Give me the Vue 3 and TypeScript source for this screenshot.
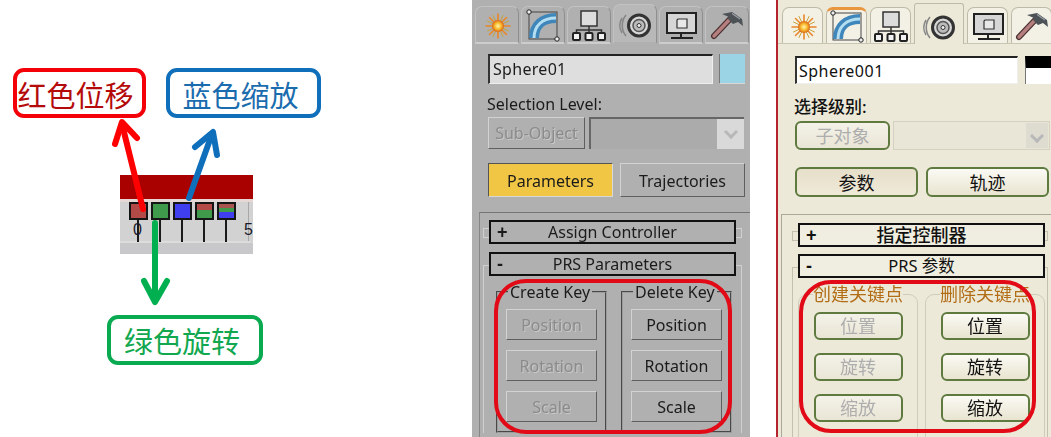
<script setup lang="ts">
interface Group {
  title: string;
  keys: string[];
  disabled: boolean;
}

interface Panel {
  theme: string;
  name: string;
  level: string;
  subObject: string;
  modes: string[];
  controller: string;
  params: string;
  groups: Group[];
}

const tabs = ["create", "modify", "hierarchy", "motion", "display", "utilities"];
const keyKinds = ["red", "green", "blue", "rg", "rgb"];

const panels: Panel[] = [
  {
    theme: "classic",
    name: "Sphere01",
    level: "Selection Level:",
    subObject: "Sub-Object",
    modes: ["Parameters", "Trajectories"],
    controller: "Assign Controller",
    params: "PRS Parameters",
    groups: [
      { title: "Create Key", keys: ["Position", "Rotation", "Scale"], disabled: true },
      { title: "Delete Key", keys: ["Position", "Rotation", "Scale"], disabled: false },
    ],
  },
  {
    theme: "xp",
    name: "Sphere001",
    level: "选择级别:",
    subObject: "子对象",
    modes: ["参数", "轨迹"],
    controller: "指定控制器",
    params: "PRS 参数",
    groups: [
      { title: "创建关键点", keys: ["位置", "旋转", "缩放"], disabled: true },
      { title: "删除关键点", keys: ["位置", "旋转", "缩放"], disabled: false },
    ],
  },
];
</script>

<template>
  <svg class="defs" aria-hidden="true">
    <defs>
      <radialGradient id="sun">
        <stop offset="0" stop-color="#fff7b0" />
        <stop offset="0.55" stop-color="#f9b92c" />
        <stop offset="1" stop-color="#d8641a" />
      </radialGradient>
    </defs>
    <symbol id="ic-create" viewBox="0 0 44 38">
      <g stroke="#e8882a" stroke-width="1.6" stroke-linecap="round">
        <path d="M23 7v24M11 19h24M14.500 10.500l17 17M31.500 10.500l-17 17" />
        <path stroke="#c9a23a" stroke-width="1" d="M18 8.500l10 21M28 8.500l-10 21M12.500 14l21 10M33.500 14l-21 10" />
      </g>
      <circle cx="23" cy="19" r="6" fill="url(#sun)" />
    </symbol>
    <symbol id="ic-modify" viewBox="0 0 44 38">
      <rect x="8" y="5" width="28" height="27" fill="none" stroke="#444" stroke-width="1" />
      <path d="M13 31C13 19 21 11 35 11" fill="none" stroke="#3f86ba" stroke-width="10" />
      <path d="M13 31C13 19 21 11 35 11" fill="none" stroke="#b4def2" stroke-width="3" />
      <circle cx="8" cy="5" r="2.200" fill="#eee" stroke="#222" />
      <circle cx="36" cy="32" r="2.200" fill="#eee" stroke="#222" />
    </symbol>
    <symbol id="ic-hierarchy" viewBox="0 0 44 38">
      <rect x="14" y="4" width="16" height="15" fill="#dcdcdc" stroke="#333" stroke-width="1.500" />
      <path d="M22 19v7M9.500 26v-3h25v3" fill="none" stroke="#333" stroke-width="1.500" />
      <g fill="#f2f2f2" stroke="#222" stroke-width="2">
        <rect x="6" y="26" width="7" height="7" rx="1" />
        <rect x="18.500" y="26" width="7" height="7" rx="1" />
        <rect x="31" y="26" width="7" height="7" rx="1" />
      </g>
    </symbol>
    <symbol id="ic-motion" viewBox="0 0 44 38">
      <path d="M13 8C8 14 8 23 13 29M9 11C6 16 6 21 9 26" fill="none" stroke="#858585" stroke-width="1.500" />
      <circle cx="26" cy="18.500" r="10.500" fill="#d8d8d8" stroke="#333" stroke-width="3" />
      <circle cx="26" cy="18.500" r="6" fill="#bbb" stroke="#555" stroke-width="1.500" />
      <circle cx="26" cy="18.500" r="2" fill="#eee" stroke="#333" />
    </symbol>
    <symbol id="ic-display" viewBox="0 0 44 38">
      <rect x="8" y="6" width="29" height="20" fill="#d6d6d6" stroke="#222" stroke-width="2" />
      <path d="M19 12h9v9h-10v-8z" fill="#e8e8e8" stroke="#333" stroke-width="1.200" />
      <path d="M22 26v4M12 31h22" stroke="#222" stroke-width="2" />
    </symbol>
    <symbol id="ic-utilities" viewBox="0 0 44 38">
      <path d="M9 29L26 11" stroke="#4a3030" stroke-width="6" stroke-linecap="round" />
      <path d="M9 29L26 11" stroke="#b57f7f" stroke-width="3.500" stroke-linecap="round" />
      <path d="M17 7L27 5L37 12L38 19L33 15L28 17L23 12L24 10z" fill="#4d5257" />
      <path d="M27 6.500L35 12" stroke="#9aa0a5" stroke-width="1.200" />
    </symbol>
  </svg>

  <main class="page">
    <section class="diagram">
      <div class="note note-red">红色位移</div>
      <div class="note note-blue">蓝色缩放</div>
      <div class="note note-green">绿色旋转</div>

      <div class="timeline">
        <div class="timeline-bar"></div>
        <div class="timeline-track">
          <div class="timeline-keys">
            <span v-for="kind in keyKinds" :key="kind" class="key" :class="'key-' + kind"></span>
          </div>
          <span class="mark mark-0">0</span>
          <span class="mark mark-5">5</span>
        </div>
      </div>

      <svg class="arrows" viewBox="0 0 340 437" fill="none" stroke-linecap="round" stroke-linejoin="round">
        <g stroke="#ff0000" stroke-width="6">
          <path d="M143 209L122 124" />
          <path d="M115 144L122 122L137 138" />
        </g>
        <g stroke="#0f6fbb" stroke-width="6">
          <path d="M189 198L212 134" />
          <path d="M195 147L213 132L217 155" />
        </g>
        <g stroke="#00b050" stroke-width="6">
          <path d="M155 223V300" />
          <path d="M144 281L155 302L167 281" />
        </g>
      </svg>
    </section>

    <section v-for="panel in panels" :key="panel.theme" class="panel" :class="panel.theme">
      <nav class="tabs">
        <div v-for="tab in tabs" :key="tab" class="tab" :class="'tab-' + tab">
          <svg class="tab-icon"><use :href="'#ic-' + tab" /></svg>
        </div>
      </nav>

      <div class="name-row">
        <div class="name">{{ panel.name }}</div>
        <div class="swatch"></div>
      </div>
      <div class="level">{{ panel.level }}</div>
      <div class="sub-row">
        <button class="btn sub" disabled>{{ panel.subObject }}</button>
        <div class="select"><span class="select-arrow"></span></div>
      </div>
      <div class="mode-row">
        <button
          v-for="(mode, i) in panel.modes"
          :key="mode"
          class="btn mode"
          :class="{ active: i === 0 }"
        >
          {{ mode }}
        </button>
      </div>

      <div class="rollups">
        <div class="rollout rollout-closed">
          <div class="rollout-head"><b>+</b>{{ panel.controller }}</div>
        </div>
        <div class="rollout rollout-open">
          <div class="rollout-head"><b>-</b>{{ panel.params }}</div>
          <div class="groups">
            <fieldset v-for="group in panel.groups" :key="group.title" class="group">
              <legend>{{ group.title }}</legend>
              <button v-for="k in group.keys" :key="k" class="btn key-btn" :disabled="group.disabled">
                {{ k }}
              </button>
            </fieldset>
          </div>
        </div>
      </div>

      <div class="ring"></div>
    </section>
  </main>
</template>

<style>
html,
body {
  background: #fff;
  overflow: hidden;
}
</style>

<style scoped>
.defs {
  position: absolute;
  width: 0;
  height: 0;
}

.page {
  display: flex;
  width: 1051px;
  height: 437px;
  overflow: hidden;
  font-family: "Noto Sans CJK SC", sans-serif;
}

/* left diagram, a free canvas */
.diagram {
  position: relative;
  flex: 0 0 472px;
}
.note {
  position: absolute;
  display: flex;
  align-items: center;
  justify-content: center;
  box-sizing: border-box;
  height: 50px;
  padding: 3px 6px 0 0;
  border: 4px solid;
  border-radius: 11px;
  font-size: 29px;
  line-height: 1;
}
.note-red {
  left: 13px;
  top: 68px;
  width: 133px;
  padding-right: 8px;
  border-color: #f40009;
  color: #b40a0a;
}
.note-blue {
  left: 166px;
  top: 68px;
  width: 155px;
  border-color: #0f6fbb;
  color: #1b6cae;
}
.note-green {
  left: 107px;
  top: 315px;
  width: 156px;
  padding-top: 1px;
  border-color: #0aaa50;
  color: #12a84f;
}
.timeline {
  position: absolute;
  left: 120px;
  top: 175px;
  width: 133px;
  height: 79px;
  background: #c8c8ca;
}
.timeline-bar {
  height: 24px;
  background: #a90000;
  border-bottom: 3px solid #e6d6d4;
}
.timeline-track {
  position: relative;
  height: 41px;
  padding: 0 0 0 9px;
  background: #d2d2d2;
  border-bottom: 2px solid #dcdcdc;
  border-right: 4px solid transparent;
  box-sizing: border-box;
  box-shadow: inset -5px 0 0 -4px #a8a8a8;
}
.timeline-keys {
  display: flex;
  gap: 3px;
}
.key {
  position: relative;
  box-sizing: border-box;
  width: 19px;
  height: 18px;
  border: 2px solid #151515;
}
.key::after {
  content: "";
  position: absolute;
  left: 6px;
  top: 16px;
  width: 2px;
  height: 22px;
  background: #1a1a1a;
}
.key-red {
  background: #b34a48;
}
.key-green {
  background: #3f9a4c;
}
.key-blue {
  background: #3f3ff0;
}
.key-rg {
  background: linear-gradient(#b34a48 45%, #3f9a4c 45%);
}
.key-rgb {
  background: linear-gradient(#a85550 25%, #3f9a4c 25%, #3f9a4c 60%, #3f3ff0 60%);
}
.mark {
  position: absolute;
  top: 19px;
  font-family: "Liberation Sans", sans-serif;
  font-size: 16px;
  line-height: 18px;
  color: #1b1b2a;
}
.mark-0 {
  left: 13px;
}
.mark-5 {
  left: 124px;
}
.arrows {
  position: absolute;
  left: 0;
  top: 0;
  width: 340px;
  height: 437px;
}

/* command panels */
.panel {
  position: relative;
  box-sizing: border-box;
  min-width: 0;
  height: 437px;
  filter: blur(0.5px);
}
.classic {
  flex: 0 0 278px;
  margin-right: 26px;
  background: #b0b0b0;
  color: #1b1b1b;
  font-family: "Noto Sans", sans-serif;
  font-size: 16px;
}
.xp {
  flex: 0 0 275px;
  background: #ece9d8;
  color: #111;
  border-left: 2px solid #b5232c;
  font-family: "Noto Sans", "Noto Sans CJK SC", sans-serif;
  font-size: 16px;
}

.tabs {
  display: flex;
  box-sizing: border-box;
  height: 44px;
  padding: 6px 0 0 3px;
  gap: 2px;
}
.xp .tabs {
  padding: 7px 0 0 4px;
  gap: 3px;
  border-bottom: 1px solid #c9c6b4;
}
.tab {
  position: relative;
  flex: 0 0 44px;
  box-sizing: border-box;
  border: 1px solid #c2c2c2;
  border-right-color: #8f8f8f;
  border-bottom: 2px solid #cdcdcd;
  border-radius: 7px 7px 0 0;
}
.xp .tab {
  flex-basis: 41px;
  border-color: #bdbaa8;
  border-bottom: 0;
  background: #f3f1e5;
}
.tab-motion {
  margin-top: -2px;
}
.classic .tab-motion {
  background: #b8b8b8;
  border-bottom-color: #b0b0b0;
}
.xp .tab-motion {
  flex-basis: 50px;
  margin-top: -4px;
  background: #ece9d8;
  margin-bottom: -1px;
  border-radius: 3px 3px 0 0;
}
.xp .tab-modify {
  border-top: 3px solid #e8973e;
}
.tab-icon {
  position: absolute;
  left: 50%;
  bottom: -3px;
  width: 44px;
  height: 38px;
  margin-left: -22px;
}

.name-row {
  display: flex;
  height: 30px;
  margin: 10px 0 0 16px;
  gap: 6px;
}
.xp .name-row {
  height: 28px;
  margin: 12px 0 0 17px;
}
.name {
  box-sizing: border-box;
  width: 225px;
  padding-left: 3px;
  line-height: 27px;
  letter-spacing: 0.3px;
  background: #dedede;
  border-top: 2px solid #222;
  border-left: 2px solid #333;
  border-right: 1px solid #efefef;
  border-bottom: 1px solid #efefef;
}
.xp .name {
  width: 223px;
  padding-left: 2px;
  background: #fff;
  line-height: 27px;
  letter-spacing: 0.5px;
}
.swatch {
  width: 25px;
  background: #9bd4e5;
  border-left: 1px solid #777;
  border-bottom: 1px solid #d8d8d8;
}
.xp .swatch {
  border-top: 12px solid #000;
  background: #fff;
  border-bottom: 0;
  margin-left: 1px;
}
.level {
  height: 33px;
  margin-left: 15px;
  line-height: 41px;
}
.xp .level {
  height: 37px;
  margin-left: 16px;
  font-size: 17px;
  font-weight: 500;
  line-height: 46px;
}

.btn {
  box-sizing: border-box;
  padding: 0;
  font: inherit;
  color: inherit;
  background: #b0b0b0;
  border: 1px solid;
  border-color: #d2d2d2 #5f5f5f #5f5f5f #d2d2d2;
  border-radius: 0;
}
.btn:disabled {
  color: #8b8b8b;
  text-shadow: 1px 1px 0 #c8c8c8;
}
.xp .btn {
  border: 2px solid #5f7a3f;
  border-radius: 6px;
  background: linear-gradient(#fbfaf4, #e8e4d0);
  font-size: 18px;
  line-height: 1;
}
.xp .btn:disabled {
  color: #adadad;
  text-shadow: none;
  background: linear-gradient(#f4f2e8, #e9e6d6);
}

.sub-row {
  display: flex;
  height: 32px;
  margin-left: 16px;
  gap: 4px;
}
.xp .sub-row {
  height: 29px;
  margin-left: 17px;
  gap: 3px;
}
.sub {
  width: 97px;
}
.xp .sub {
  width: 95px;
}
.select {
  display: flex;
  justify-content: flex-end;
  box-sizing: border-box;
  width: 155px;
  background: #ababab;
  border-top: 2px solid #666;
  border-left: 2px solid #666;
}
.xp .select {
  width: 157px;
  background: #e9e6d7;
  border: 1px solid #d4d1c2;
}
.select-arrow {
  position: relative;
  width: 27px;
  background: #d9d9d9;
}
.xp .select-arrow {
  width: 22px;
  margin: 1px;
  background: #dedbd0;
}
.select-arrow::after {
  content: "";
  position: absolute;
  left: 9px;
  top: 8px;
  width: 7px;
  height: 7px;
  border-right: 3px solid #b8b8b8;
  border-bottom: 3px solid #b8b8b8;
  transform: rotate(45deg);
}
.xp .select-arrow::after {
  left: 6px;
}

.mode-row {
  display: flex;
  height: 34px;
  margin: 14px 0 0 16px;
  gap: 7px;
}
.xp .mode-row {
  height: 30px;
  margin: 17px 0 0 17px;
  gap: 8px;
}
.mode {
  width: 125px;
  padding-top: 1px;
}
.xp .mode {
  width: 123px;
}
.classic .active {
  background: #f1c644;
  border-color: #555 #d8d8d8 #d8d8d8 #555;
}
.xp .active {
  background: linear-gradient(#e6dfca, #efe9d8);
}

.rollups {
  box-sizing: border-box;
  height: 225px;
  margin: 15px 0 0 7px;
  padding: 7px 8px 0 3px;
  border-top: 1px solid #757575;
  border-left: 1px solid #858585;
}
.xp .rollups {
  margin: 17px 0 0 3px;
  padding: 8px 3px 0 10px;
  border-color: #aaa899;
}
.rollout {
  position: relative;
  padding: 0 6px;
}
.xp .rollout {
  padding: 0 3px 0 6px;
}
.rollout::before {
  content: "";
  position: absolute;
  left: 0;
  right: 0;
  border: 1px solid #d0d0d0;
  border-bottom: 0;
}
.xp .rollout::before {
  border-color: #c4c1b0;
}
.rollout-closed::before {
  top: 8px;
  bottom: 6px;
  border-bottom: 1px solid #d0d0d0;
}
.rollout-open {
  margin-top: 8px;
}
.xp .rollout-open {
  margin-top: 7px;
}
.rollout-open::before {
  top: 13px;
  bottom: 0;
}
.rollout-head {
  position: relative;
  box-sizing: border-box;
  height: 24px;
  background: #b0b0b0;
  border: 2px solid #111;
  line-height: 20px;
  text-align: center;
}
.xp .rollout-head {
  background: #f0eee0;
  font-size: 16.500px;
  line-height: 20px;
}
.xp .rollout-closed .rollout-head {
  font-size: 18px;
  font-weight: 500;
}
.rollout-head b {
  position: absolute;
  left: 6px;
  top: 0;
  font-family: "Liberation Sans", sans-serif;
  font-size: 18px;
}

.groups {
  display: flex;
  margin: 6px -3px 0 7px;
  gap: 14px;
}
.xp .groups {
  margin: 6px 0 0;
  gap: 7px;
}
.group {
  display: flex;
  flex-direction: column;
  align-items: center;
  gap: 10px;
  box-sizing: border-box;
  flex: 0 0 111px;
  min-width: 0;
  height: 151px;
  margin: 0;
  padding: 7px 0 0;
  border: 2px groove #9c9c9c;
}
.xp .group {
  flex-basis: 120px;
  height: 170px;
  padding-top: 8px;
  gap: 13px;
  border: 1px solid #cfccbb;
  border-radius: 9px;
}
.group legend {
  margin: 0 0 0 10px;
  padding: 0 2px;
  line-height: 20px;
}
.xp .group legend {
  margin: 0 auto;
  padding: 0;
  color: #b26d16;
  font-size: 18px;
}
.key-btn {
  flex: 0 0 31px;
  width: 91px;
}
.xp .key-btn {
  flex-basis: 28px;
  width: 89px;
}

/* red highlight drawn over the key groups */
.ring {
  position: absolute;
  left: 22px;
  top: 279px;
  box-sizing: border-box;
  width: 238px;
  height: 155px;
  border: 4px solid #e20a17;
  border-radius: 32px;
}
.xp .ring {
  left: 21px;
  top: 280px;
  width: 237px;
  height: 153px;
}
</style>
